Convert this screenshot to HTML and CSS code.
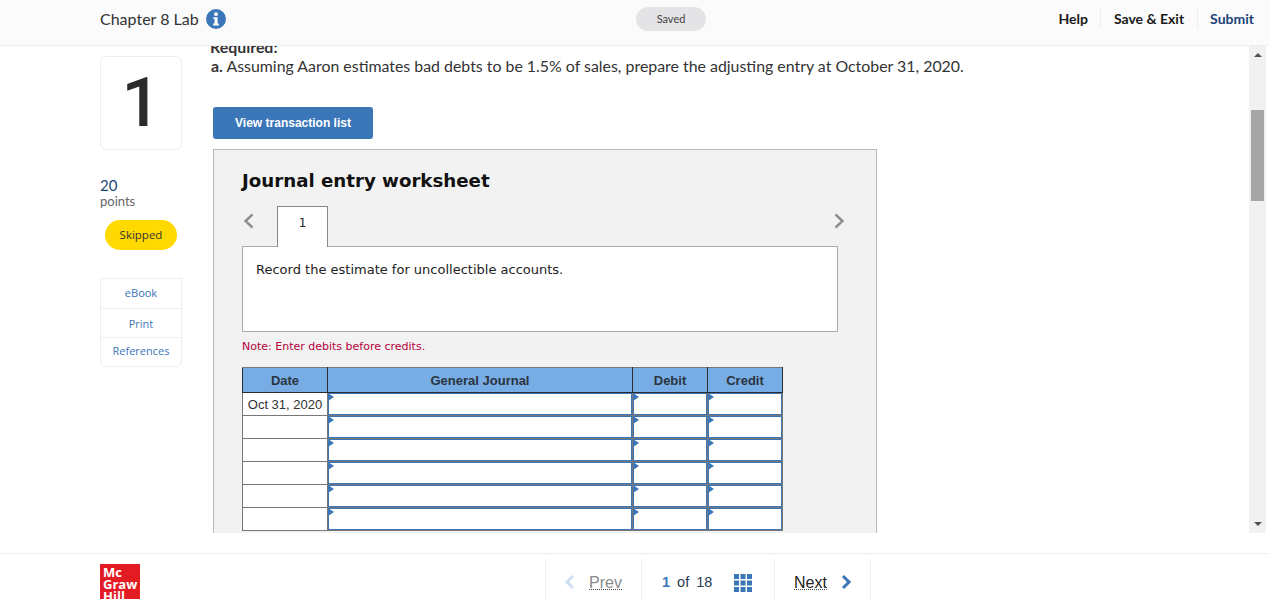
FILE: index.html
```html
<!DOCTYPE html>
<html lang="en">
<head>
    <meta charset="UTF-8">
    <title>Chapter 8 Lab</title>
    <link rel="stylesheet" href="styles.css">
</head>
<body>
    <header class="top-bar">
        <div class="title-group">
            <span class="lab-title">Chapter 8 Lab</span>
            <svg class="info-icon" width="20" height="20" viewBox="0 0 20 20">
                <circle cx="10" cy="10" r="10" fill="#3b76b9"/>
                <circle cx="10" cy="5.2" r="1.9" fill="#fff"/>
                <path d="M7.4 8.2h4.2v6.4h1.2v1.9H7.2v-1.9h1.3v-4.5H7.4z" fill="#fff"/>
            </svg>
        </div>
        <div class="saved-pill">Saved</div>
        <nav class="top-links">
            <a class="top-link">Help</a>
            <a class="top-link">Save &amp; Exit</a>
            <a class="top-link submit">Submit</a>
        </nav>
    </header>

    <main class="middle">
        <aside class="sidebar">
            <div class="question-number">1</div>
            <div class="points-value">20</div>
            <div class="points-label">points</div>
            <div class="skipped-pill">Skipped</div>
            <div class="side-links">
                <a class="side-link">eBook</a>
                <a class="side-link">Print</a>
                <a class="side-link">References</a>
            </div>
        </aside>

        <section class="question">
            <div class="question-inner">
                <p class="required"><b>Required:</b><br><b class="part-label">a.</b> Assuming Aaron estimates bad debts to be 1.5% of sales, prepare the adjusting entry at October 31, 2020.</p>
                <button class="view-list">View transaction list</button>

                <div class="worksheet">
                    <h2 class="worksheet-title">Journal entry worksheet</h2>
                    <div class="tab-row">
                        <svg class="tab-arrow" width="12" height="16" viewBox="0 0 12 16">
                            <path d="M10.500 1.500 3.500 8l7 6.500" fill="none" stroke="#8e8e8e" stroke-width="2.400"/>
                        </svg>
                        <div class="tab">1</div>
                        <svg class="tab-arrow next" width="12" height="16" viewBox="0 0 12 16">
                            <path d="m2.500 1.500 7 6.500-7 6.500" fill="none" stroke="#8e8e8e" stroke-width="2.400"/>
                        </svg>
                    </div>
                    <div class="instruction">Record the estimate for uncollectible accounts.</div>
                    <p class="note">Note: Enter debits before credits.</p>

                    <table class="journal">
                        <colgroup>
                            <col class="col-date">
                            <col class="col-account">
                            <col class="col-amount">
                            <col class="col-amount">
                        </colgroup>
                        <thead>
                            <tr>
                                <th>Date</th>
                                <th>General Journal</th>
                                <th>Debit</th>
                                <th>Credit</th>
                            </tr>
                        </thead>
                        <tbody>
                            <tr><td class="date">Oct 31, 2020</td><td class="entry"></td><td class="entry"></td><td class="entry"></td></tr>
                            <tr><td class="date"></td><td class="entry"></td><td class="entry"></td><td class="entry"></td></tr>
                            <tr><td class="date"></td><td class="entry"></td><td class="entry"></td><td class="entry"></td></tr>
                            <tr><td class="date"></td><td class="entry"></td><td class="entry"></td><td class="entry"></td></tr>
                            <tr><td class="date"></td><td class="entry"></td><td class="entry"></td><td class="entry"></td></tr>
                            <tr><td class="date"></td><td class="entry"></td><td class="entry"></td><td class="entry"></td></tr>
                        </tbody>
                    </table>
                </div>
            </div>
        </section>

        <div class="scrollbar">
            <span class="arrow-up"></span>
            <span class="thumb"></span>
            <span class="arrow-down"></span>
        </div>
    </main>

    <footer class="bottom-bar">
        <div class="logo">Mc<br>Graw<br>Hill</div>
        <div class="pager">
            <div class="pager-part prev">
                <svg width="11" height="16" viewBox="0 0 11 16">
                    <path d="M9 2 3 8l6 6" fill="none" stroke="#cfdef0" stroke-width="3"/>
                </svg>
                <span class="pager-link">Prev</span>
            </div>
            <div class="pager-part count">
                <b>1</b>
                <span>of</span>
                <span>18</span>
                <svg class="grid-icon" width="18" height="18" viewBox="0 0 18 18" fill="#3b76b9">
                    <rect width="5" height="5"/><rect x="6.500" width="5" height="5"/><rect x="13" width="5" height="5"/>
                    <rect y="6.500" width="5" height="5"/><rect x="6.500" y="6.500" width="5" height="5"/><rect x="13" y="6.500" width="5" height="5"/>
                    <rect y="13" width="5" height="5"/><rect x="6.500" y="13" width="5" height="5"/><rect x="13" y="13" width="5" height="5"/>
                </svg>
            </div>
            <div class="pager-part next">
                <span class="pager-link">Next</span>
                <svg width="11" height="16" viewBox="0 0 11 16">
                    <path d="m2 2 6 6-6 6" fill="none" stroke="#3b76b9" stroke-width="3"/>
                </svg>
            </div>
        </div>
    </footer>
</body>
</html>
```

FILE: styles.css
```css
* {
    box-sizing: border-box;
}

html, body {
    height: 100%;
}

body {
    margin: 0;
    height: 599px;
    overflow: hidden;
    display: flex;
    flex-direction: column;
    background-color: #fff;
    color: #2b2b2b;
    font-family: Lato, 'Open Sans', sans-serif;
}

/* top bar */
.top-bar {
    height: 46px;
    flex: none;
    display: grid;
    grid-template-columns: 536px 70px 1fr;
    align-items: center;
    padding: 0 15px 0 100px;
    background-color: #fbfbfb;
    border-bottom: 1px solid #eeeeee;
}

.title-group {
    display: flex;
    align-items: center;
    gap: 7px;
    margin-top: -9px;
}

.lab-title {
    font-size: 16px;
    color: #333;
}

.info-icon {
    margin-top: 1px;
}

.saved-pill {
    height: 24px;
    margin-top: -7px;
    line-height: 24px;
    text-align: center;
    font-size: 11px;
    color: #444;
    background-color: #e4e3e6;
    border-radius: 12px;
}

.top-links {
    display: flex;
    justify-content: flex-end;
    margin-top: -8px;
}

.top-link {
    padding: 2px 12.500px;
    font-size: 14px;
    font-weight: 700;
    color: #1a1a1a;
    border-left: 1px solid #eeeeee;
}

.top-link:first-child {
    border-left: none;
}

.top-link.submit {
    padding-right: 0;
    color: #1d4477;
}

/* middle part */
.middle {
    height: 487px;
    flex: none;
    display: flex;
}

.sidebar {
    width: 82px;
    flex: none;
    margin-left: 100px;
    padding-top: 10px;
}

.question-number {
    height: 94px;
    line-height: 92px;
    text-align: center;
    font-family: Roboto, sans-serif;
    font-size: 69px;
    font-weight: 500;
    color: #2b2b2b;
    border: 1px solid #eeeeee;
    border-radius: 6px;
}

.points-value {
    margin-top: 27px;
    font-size: 15px;
    line-height: 16px;
    color: #1d4477;
}

.points-label {
    font-size: 13px;
    line-height: 16px;
    color: #666;
}

.skipped-pill {
    width: 72px;
    height: 30px;
    margin: 11px 0 0 5px;
    line-height: 30px;
    text-align: center;
    font-family: 'Open Sans', sans-serif;
    font-size: 11.500px;
    color: #333;
    background-color: #ffd900;
    border-radius: 15px;
}

.side-links {
    margin-top: 28px;
    display: flex;
    flex-direction: column;
    border: 1px solid #eeeeee;
    border-radius: 0 0 6px 6px;
}

.side-link {
    height: 29px;
    line-height: 28px;
    text-align: center;
    font-family: 'Open Sans', sans-serif;
    font-size: 11px;
    color: #3b76b9;
    border-top: 1px solid #eeeeee;
}

.side-link:first-child {
    border-top: none;
}

.side-link:nth-child(2) {
    line-height: 30px;
}

.side-link:nth-child(3) {
    line-height: 26px;
}

.question {
    flex: 1;
    min-width: 0;
    overflow: hidden;
    padding-left: 28px;
}

.question-inner {
    margin-top: -9px;
}

.required {
    margin: 0;
    font-size: 15.900px;
    line-height: 19px;
    color: #333;
}

.part-label {
    margin-left: 1px;
}

.view-list {
    display: block;
    width: 160px;
    height: 32px;
    margin: 32px 0 0 3px;
    padding: 0;
    border: none;
    border-radius: 3px;
    background-color: #3b76b9;
    color: #fff;
    font-family: 'Liberation Sans', Arial, sans-serif;
    font-size: 12px;
    font-weight: 700;
}

.worksheet {
    width: 664px;
    height: 500px;
    margin: 10px 0 0 3px;
    padding: 19px 28px 0;
    background-color: #f2f2f2;
    border: 1px solid #bbbbbb;
    font-family: 'DejaVu Sans', Verdana, sans-serif;
}

.worksheet-title {
    margin: 0;
    font-size: 18.200px;
    line-height: 24px;
    font-weight: 700;
    color: #111;
}

.tab-row {
    width: 596px;
    height: 41px;
    margin-top: 13px;
    display: flex;
    align-items: flex-start;
}

.tab-arrow {
    margin-top: 7px;
}

.tab-arrow.next {
    margin-left: auto;
    margin-right: -7px;
}

.tab {
    width: 51px;
    height: 41px;
    margin-left: 23px;
    padding-top: 9px;
    text-align: center;
    font-size: 12px;
    color: #222;
    background-color: #fff;
    border: 1px solid #888888;
    border-bottom: none;
    position: relative;
    z-index: 1;
}

.instruction {
    width: 596px;
    height: 86px;
    margin-top: -1px;
    padding: 14px 13px;
    font-size: 13px;
    line-height: 17px;
    color: #222;
    background-color: #fff;
    border: 1px solid #aaaaaa;
}

.note {
    margin: 8px 0 13px;
    font-size: 11px;
    line-height: 14px;
    color: #b5003a;
}

/* journal table */
.journal {
    table-layout: fixed;
    width: 541px;
    border-collapse: collapse;
    font-family: 'Liberation Sans', Arial, sans-serif;
    font-size: 13px;
}

.col-date {
    width: 85px;
}

.col-account {
    width: 305px;
}

.col-amount {
    width: 75px;
}

.journal th {
    height: 25px;
    padding: 0;
    font-weight: 700;
    color: #2b3540;
    background-color: #78ace4;
    border: 1px solid #2b2b2b;
    border-top-color: #777777;
}

.journal td {
    height: 23px;
    padding: 0;
    background-color: #fff;
    border: 1px solid #777777;
}

.journal td.date {
    text-align: center;
    color: #333;
}

.journal td.entry {
    position: relative;
    box-shadow: inset 0 0 0 1px #3b76b9;
}

.journal td.entry::before {
    content: "";
    position: absolute;
    left: 0;
    top: 0;
    border-left: 6px solid #3b76b9;
    border-top: 4px solid transparent;
    border-bottom: 4px solid transparent;
}

/* fake scrollbar, the page is a photo so it does not have to scroll */
.scrollbar {
    width: 17px;
    flex: none;
    margin-right: 3px;
    position: relative;
    background-color: #f1f1f1;
    display: flex;
    flex-direction: column;
    align-items: center;
}

.arrow-up {
    margin-top: 7px;
    border-left: 4px solid transparent;
    border-right: 4px solid transparent;
    border-bottom: 4px solid #505050;
}

.thumb {
    width: 13px;
    height: 91px;
    margin-top: 53px;
    background-color: #a6a6a6;
}

.arrow-down {
    margin-top: auto;
    margin-bottom: 7px;
    border-left: 4px solid transparent;
    border-right: 4px solid transparent;
    border-top: 4px solid #505050;
}

/* bottom bar */
.bottom-bar {
    flex: 1;
    min-height: 0;
    margin-top: 20px;
    overflow: hidden;
    position: relative;
    border-top: 1px solid #eeeeee;
    padding: 10px 0 0 100px;
}

.logo {
    width: 40px;
    height: 40px;
    padding: 2px 0 0 3px;
    background-color: #e31b23;
    color: #fff;
    font-family: 'Open Sans', sans-serif;
    font-size: 13px;
    line-height: 12px;
    font-weight: 700;
}

.pager {
    position: absolute;
    left: 545px;
    top: 5px;
    height: 60px;
    display: flex;
    font-family: 'Liberation Sans', Arial, sans-serif;
    font-size: 16px;
}

.pager-part {
    height: 60px;
    display: flex;
    align-items: flex-start;
    padding-top: 15px;
    border-left: 1px solid #eeeeee;
}

.pager-part.prev {
    width: 96px;
    padding-left: 18px;
    gap: 14px;
    color: #8a8a8a;
}

.pager-part.count {
    width: 133px;
    padding-left: 20px;
    gap: 7px;
    font-size: 14.500px;
    color: #2b3a55;
}

.pager-part.count b {
    color: #3b76b9;
}

.grid-icon {
    margin-left: 15px;
}

.pager-part.next {
    width: 97px;
    padding-left: 19px;
    gap: 14px;
    color: #222;
    border-right: 1px solid #eeeeee;
}

.pager-link {
    height: 16px;
    line-height: 18px;
    border-bottom: 1px dotted #444;
}
```
